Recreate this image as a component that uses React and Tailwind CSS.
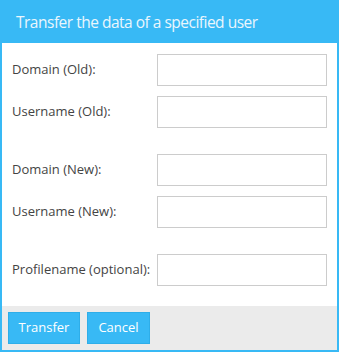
const groups = [
  ['Domain (Old):', 'Username (Old):'],
  ['Domain (New):', 'Username (New):'],
  ['Profilename (optional):'],
];

export default function App() {
  return (
    <div className="w-[339px] h-[352px] border-2 border-[#38b9f5] bg-white flex flex-col" style={{ fontFamily: '"Open Sans", sans-serif' }}>
      <div className="h-[41px] bg-[#38b9f5] pl-[14px] flex items-center text-[15.5px] tracking-[-0.5px] text-[#eaf6fd]">
        Transfer the data of a specified user
      </div>
      <div className="flex-1 flex flex-col gap-[26px] pt-[11px] pl-[10px] pr-[10px]">
        {groups.map((group, gi) => (
          <div key={gi} className="flex flex-col gap-[10px]">
            {group.map(label => (
              <div key={label} className="flex items-center justify-between">
                <span className="text-[13px] text-[#444]">{label}</span>
                <input type="text" className="w-[170px] h-[32px] border border-[#cccccc] outline-none" />
              </div>
            ))}
          </div>
        ))}
      </div>
      <div className="h-[44px] bg-[#ebebeb] flex items-start gap-[7px] pl-[6px] pt-[6px]">
        <button className="h-[32px] w-[72px] bg-[#38b9f5] border border-[#2eaee9] text-white text-[13px]">Transfer</button>
        <button className="h-[32px] w-[63px] bg-[#38b9f5] border border-[#2eaee9] text-white text-[13px]">Cancel</button>
      </div>
    </div>
  );
}
